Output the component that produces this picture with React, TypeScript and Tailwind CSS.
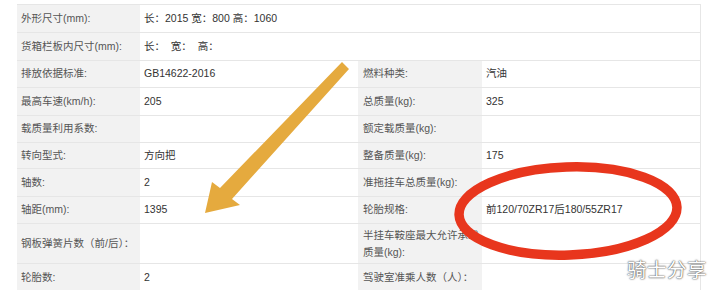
import React from "react";

type Row = {
  h: string;
  l1: React.ReactNode;
  v1?: string;
  l2?: React.ReactNode;
  v2?: string;
  span?: boolean;
};

const rows: Row[] = [
  { h: "h-[28px]", l1: "外形尺寸(mm):", v1: "长：2015 宽：800 高：1060", span: true },
  { h: "h-[28px]", l1: "货箱栏板内尺寸(mm):", v1: "长：  宽：  高：", span: true },
  { h: "h-[27px]", l1: "排放依据标准:", v1: "GB14622-2016", l2: "燃料种类:", v2: "汽油" },
  { h: "h-[28px]", l1: "最高车速(km/h):", v1: "205", l2: "总质量(kg):", v2: "325" },
  { h: "h-[27px]", l1: "载质量利用系数:", v1: "", l2: "额定载质量(kg):", v2: "" },
  { h: "h-[26px]", l1: "转向型式:", v1: "方向把", l2: "整备质量(kg):", v2: "175" },
  { h: "h-[28px]", l1: "轴数:", v1: "2", l2: "准拖挂车总质量(kg):", v2: "" },
  { h: "h-[27px]", l1: "轴距(mm):", v1: "1395", l2: "轮胎规格:", v2: "前120/70ZR17后180/55ZR17" },
  {
    h: "h-[40px]",
    l1: "钢板弹簧片数（前/后）：",
    v1: "",
    l2: (
      <span className="leading-[17px]">
        半挂车鞍座最大允许承载
        <br />
        质量(kg):
      </span>
    ),
    v2: "",
  },
  { h: "h-[28px]", l1: "轮胎数:", v1: "2", l2: "驾驶室准乘人数（人）：", v2: "" },
];

export default function App() {
  return (
    <div
      className="relative w-[718px] h-[290px] overflow-hidden bg-white text-[10.5px]"
      style={{ fontFamily: '"Liberation Sans", "Noto Sans CJK SC", sans-serif' }}
    >
      <div className="ml-[17px] mt-[4px] w-[684px] border-t border-r border-[#e6e6e6]">
        {rows.map((r, i) => (
          <div
            key={i}
            className={`grid grid-cols-[123px_218px_124px_219px] border-b border-[#e6e6e6] ${r.h}`}
          >
            <div className="flex items-center bg-[#f2f2f2] pl-[4px] text-[#555] whitespace-nowrap">
              {r.l1}
            </div>
            {r.span ? (
              <div className="col-span-3 flex items-center pl-[4px] text-[#333] whitespace-pre">
                {r.v1}
              </div>
            ) : (
              <>
                <div className="flex items-center pl-[4px] text-[#333]">{r.v1}</div>
                <div className="flex items-center bg-[#f2f2f2] pl-[5px] text-[#555] whitespace-nowrap">
                  {r.l2}
                </div>
                <div className="flex items-center pl-[4px] text-[#333] whitespace-nowrap">{r.v2}</div>
              </>
            )}
          </div>
        ))}
      </div>

      <svg
        className="absolute left-0 top-0 pointer-events-none"
        width="718"
        height="290"
        viewBox="0 0 718 290"
      >
        <ellipse
          cx="568"
          cy="211"
          rx="109"
          ry="44"
          fill="none"
          stroke="#e8361d"
          strokeWidth="9.5"
          transform="rotate(-2 568 211)"
        />
        <polygon
          points="342,62 349,69 232,199 240,205 205,213 212,182 220,188"
          fill="#e5aa3e"
        />
      </svg>

      <div
        className="absolute left-[627px] top-[254px] text-[19.5px] text-white tracking-[0.5px]"
        style={{
          fontFamily: '"Noto Sans CJK SC", sans-serif',
          textShadow: "0 0 2px rgba(70,70,70,0.95), 0 0 1px rgba(70,70,70,0.95)",
        }}
      >
        骑士分享
      </div>
    </div>
  );
}
